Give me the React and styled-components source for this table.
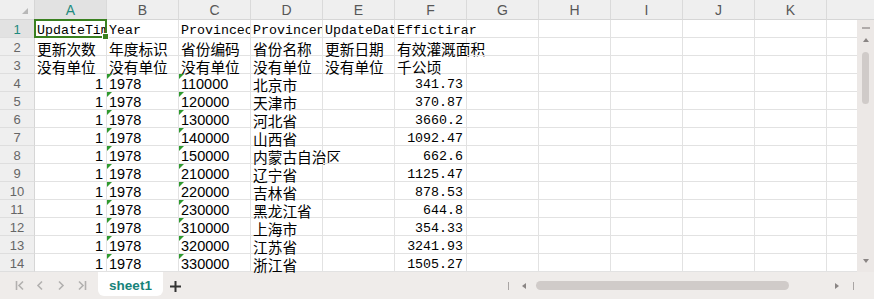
import React from 'react';
import styled, { createGlobalStyle } from 'styled-components';

const GlobalStyle = createGlobalStyle`
  html, body {
    margin: 0;
    padding: 0;
    background: #fff;
  }
  body {
    font-family: "Liberation Sans", Arial, sans-serif;
  }
`;

const Wraper = styled.div`
  width: 874px;
  height: 299px;
  display: flex;
  flex-direction: column;
  overflow: hidden;
  background: #fff;
`;

const Sheet = styled.div`
  display: grid;
  grid-template-columns: 35px repeat(11, 72px) 30px 17px;
  grid-template-rows: 20px repeat(14, 18px);
  height: 272px;
  background: #fff;
`;

const Corner = styled.div`
  position: relative;
  background: #efefef;
  border-right: 1px solid #d6d6d6;
  border-bottom: 1px solid #d6d6d6;

  &::after {
    content: '';
    position: absolute;
    right: 6px;
    bottom: 5px;
    border-left: 6px solid transparent;
    border-bottom: 6px solid #b8b8b8;
  }
`;

const ColHeader = styled.div`
  display: flex;
  align-items: center;
  justify-content: center;
  grid-column: ${({ $span }) => ($span ? `span ${$span}` : 'auto')};
  background: ${({ $selected }) => ($selected ? '#e2e2e2' : '#efefef')};
  color: ${({ $selected }) => ($selected ? '#1f8a7e' : '#575757')};
  border-right: ${({ $last }) => ($last ? 'none' : '1px solid #dadada')};
  border-bottom: 1px solid #d6d6d6;
  font-size: 14px;
`;

const RowHeader = styled.div`
  display: flex;
  align-items: center;
  justify-content: center;
  padding-top: 1px;
  background: ${({ $selected }) => ($selected ? '#e2e2e2' : '#efefef')};
  color: ${({ $selected }) => ($selected ? '#1f8a7e' : '#666')};
  border-right: 1px solid #d6d6d6;
  border-bottom: 1px solid #dedede;
  font-size: 13px;
`;

const fonts = {
  m: `font-family: "Liberation Mono", "Noto Sans CJK SC", monospace; font-size: 13.3px;`,
  s: `font-family: "Liberation Sans", Arial, sans-serif; font-size: 14.5px;`,
  c: `font-family: "Noto Sans CJK SC", "Liberation Sans", sans-serif; font-size: 14.7px;`,
};

const Cell = styled.div`
  position: relative;
  box-sizing: border-box;
  padding: 2px ${({ $right, $clip }) => ($clip ? '0' : $right ? '3px' : '2px')} 0 2px;
  line-height: 17px;
  white-space: nowrap;
  text-align: ${({ $right }) => ($right ? 'right' : 'left')};
  border-right: ${({ $last }) => ($last ? 'none' : '1px solid #e2e2e2')};
  border-bottom: 1px solid #e2e2e2;
  color: #000;
  ${({ $font }) => fonts[$font] || fonts.s}

  ${({ $flag }) =>
    $flag &&
    `&::before {
      content: '';
      position: absolute;
      top: 0;
      left: 0;
      border-top: 5px solid #2e9a2e;
      border-right: 5px solid transparent;
    }`}
`;

const CellText = styled.span`
  display: block;
  overflow: ${({ $clip }) => ($clip ? 'hidden' : 'visible')};
`;

// active cell frame, sits above neighbouring cells
const Selection = styled.div`
  position: absolute;
  z-index: 3;
  top: -1px;
  left: -1px;
  right: -1px;
  bottom: -1px;
  border: 2px solid #3a8020;
  pointer-events: none;
`;

const Handle = styled.div`
  position: absolute;
  right: -4px;
  bottom: -4px;
  width: 5px;
  height: 5px;
  background: #3a8020;
  border: 1px solid #fff;
`;

const VScroll = styled.div`
  grid-column: 14;
  grid-row: 2 / span 14;
  display: flex;
  flex-direction: column;
  align-items: center;
  padding-top: 7px;
  padding-bottom: 9px;
  background: #ece8e6;
`;

const Dash = styled.div`
  width: 8px;
  height: 2px;
  background: #b0abaa;
`;

const Arrow = styled.div`
  width: 0;
  height: 0;
  margin: ${({ $m }) => $m || 0};
  ${({ $dir }) =>
    $dir === 'up'
      ? 'border-left: 3px solid transparent; border-right: 3px solid transparent; border-bottom: 4px solid #8a8584;'
      : $dir === 'down'
      ? 'border-left: 3px solid transparent; border-right: 3px solid transparent; border-top: 4px solid #8a8584;'
      : $dir === 'left'
      ? 'border-top: 3px solid transparent; border-bottom: 3px solid transparent; border-right: 4px solid #8a8584;'
      : 'border-top: 3px solid transparent; border-bottom: 3px solid transparent; border-left: 4px solid #8a8584;'}
`;

const VThumb = styled.div`
  width: 7px;
  height: 52px;
  margin-top: 10px;
  border-radius: 4px;
  background: #d0cbc9;
`;

const Spacer = styled.div`
  flex: 1;
`;

const TabBar = styled.div`
  height: 27px;
  display: flex;
  align-items: flex-start;
  background: #efecea;
`;

const Nav = styled.div`
  display: flex;
  align-items: center;
  height: 27px;
  padding-left: 15px;
  gap: 11px;
`;

const Tab = styled.div`
  width: 65px;
  height: 24px;
  margin-left: 10px;
  display: flex;
  align-items: center;
  justify-content: center;
  background: #fff;
  border-radius: 0 0 6px 6px;
  color: #17837a;
  font-weight: bold;
  font-size: 13.5px;
  padding-top: 3px;
  box-sizing: border-box;
`;

const Plus = styled.div`
  height: 27px;
  display: flex;
  align-items: center;
  margin-left: 6px;
  padding-top: 2px;
  box-sizing: border-box;
`;

const HScroll = styled.div`
  margin-left: auto;
  width: 352px;
  height: 27px;
  margin-right: 17px;
  display: flex;
  align-items: center;
  padding-right: 3px;
  box-sizing: border-box;
`;

const Bar = styled.div`
  width: 1px;
  height: 8px;
  background: #a9a5a4;
  margin-left: ${({ $ml }) => $ml || 0};
`;

const HThumb = styled.div`
  width: 253px;
  height: 9px;
  margin-left: 10px;
  border-radius: 5px;
  background: #d0cbc9;
`;

const NavIcon = ({ type }) => {
  const paths = {
    first: 'M1.5 1v9 M8 1.5 4 5.5l4 4',
    prev: 'M6 1.5 2 5.5l4 4',
    next: 'M2 1.5l4 4-4 4',
    last: 'M1 1.5l4 4-4 4 M7.5 1v9',
  };
  return (
    <svg width="10" height="11" viewBox="0 0 10 11" fill="none">
      <path d={paths[type]} stroke="#b2b0af" strokeWidth="1.6" />
    </svg>
  );
};

const letters = ['A', 'B', 'C', 'D', 'E', 'F', 'G', 'H', 'I', 'J', 'K'];

const data = [
  ['110000', '北京市', '341.73'],
  ['120000', '天津市', '370.87'],
  ['130000', '河北省', '3660.2'],
  ['140000', '山西省', '1092.47'],
  ['150000', '内蒙古自治区', '662.6'],
  ['210000', '辽宁省', '1125.47'],
  ['220000', '吉林省', '878.53'],
  ['230000', '黑龙江省', '644.8'],
  ['310000', '上海市', '354.33'],
  ['320000', '江苏省', '3241.93'],
  ['330000', '浙江省', '1505.27'],
];

const headRows = [
  [
    { t: 'UpdateTime', font: 'm', clip: true, sel: true },
    { t: 'Year', font: 'm' },
    { t: 'Provincecode', font: 'm', clip: true },
    { t: 'Provincename', font: 'm', clip: true },
    { t: 'UpdateDate', font: 'm', clip: true },
    { t: 'Effictirar', font: 'm' },
  ],
  [
    { t: '更新次数', font: 'c' },
    { t: '年度标识', font: 'c' },
    { t: '省份编码', font: 'c' },
    { t: '省份名称', font: 'c' },
    { t: '更新日期', font: 'c' },
    { t: '有效灌溉面积', font: 'c' },
  ],
  [
    { t: '没有单位', font: 'c' },
    { t: '没有单位', font: 'c' },
    { t: '没有单位', font: 'c' },
    { t: '没有单位', font: 'c' },
    { t: '没有单位', font: 'c' },
    { t: '千公顷', font: 'c' },
  ],
];

const rows = [
  ...headRows,
  ...data.map(([code, name, area]) => [
    { t: '1', font: 's', right: true },
    { t: '1978', font: 's', flag: true },
    { t: code, font: 's', flag: true },
    { t: name, font: 'c' },
    { t: '' },
    { t: area, font: 'm', right: true },
  ]),
];

const App = () => {
  return (
    <Wraper>
      <GlobalStyle />
      <Sheet>
        <Corner />
        {letters.map((l) => (
          <ColHeader key={l} $selected={l === 'A'}>
            {l}
          </ColHeader>
        ))}
        <ColHeader $span={2} $last />

        {rows.map((row, r) => (
          <React.Fragment key={r}>
            <RowHeader $selected={r === 0}>{r + 1}</RowHeader>
            {Array.from({ length: 12 }).map((_, c) => {
              const cell = row[c] || { t: '' };
              return (
                <Cell
                  key={c}
                  $font={cell.font}
                  $right={cell.right}
                  $clip={cell.clip}
                  $flag={cell.flag}
                  $last={c === 11}
                >
                  <CellText $clip={cell.clip}>{cell.t}</CellText>
                  {cell.sel && (
                    <Selection>
                      <Handle />
                    </Selection>
                  )}
                </Cell>
              );
            })}
          </React.Fragment>
        ))}

        <VScroll>
          <Dash />
          <Arrow $dir="up" $m="9px 0 0" />
          <VThumb />
          <Spacer />
          <Arrow $dir="down" />
        </VScroll>
      </Sheet>

      <TabBar>
        <Nav>
          <NavIcon type="first" />
          <NavIcon type="prev" />
          <NavIcon type="next" />
          <NavIcon type="last" />
        </Nav>
        <Tab>sheet1</Tab>
        <Plus>
          <svg width="13" height="13" viewBox="0 0 13 13">
            <path d="M6.5 1v11 M1 6.5h11" stroke="#333" strokeWidth="2" />
          </svg>
        </Plus>
        <HScroll>
          <Bar $ml="3px" />
          <Arrow $dir="left" $m="0 0 0 13px" />
          <HThumb />
          <Arrow $dir="right" $m="0 0 0 46px" />
          <Spacer />
          <Bar />
        </HScroll>
      </TabBar>
    </Wraper>
  );
};

export default App;
